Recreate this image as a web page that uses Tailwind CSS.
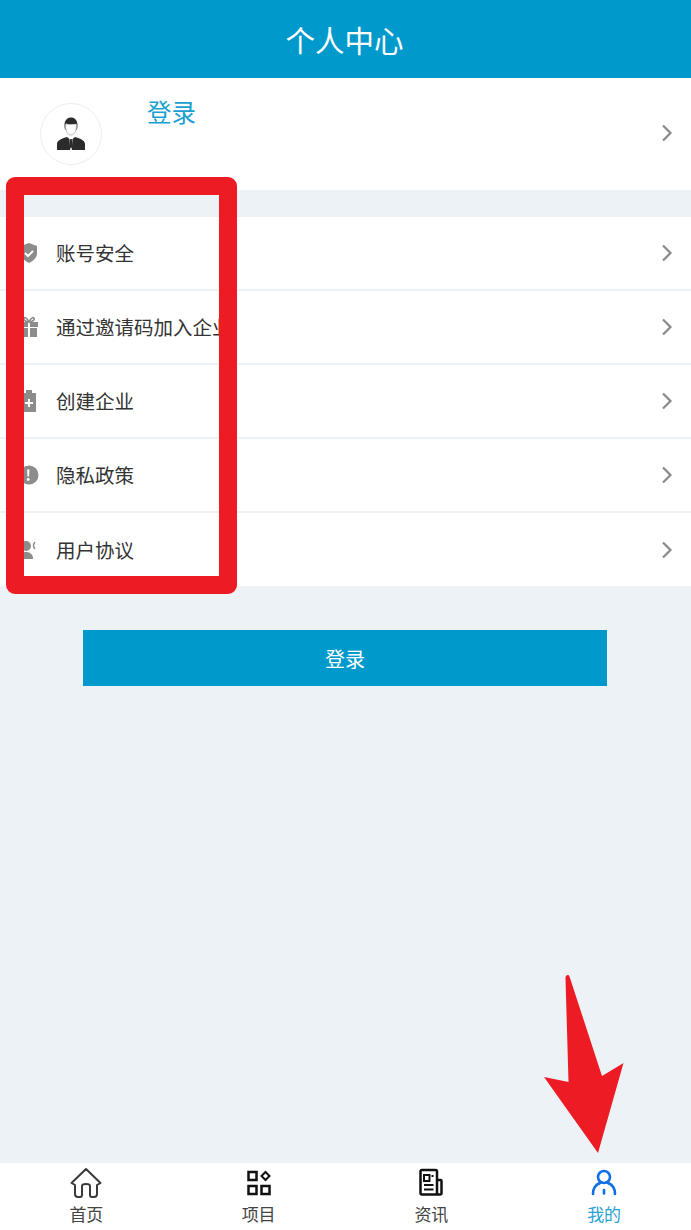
<!DOCTYPE html>
<html lang="zh">
<head>
<meta charset="UTF-8" />
<meta name="viewport" content="width=device-width, initial-scale=1.0" />
<title>个人中心</title>
<script src="https://cdn.jsdelivr.net/npm/@tailwindcss/browser@4"></script>
</head>
<body class="relative w-[691px] h-[1230px] overflow-hidden flex flex-col bg-[#edf2f6] font-['Noto_Sans_CJK_SC','Noto_Sans',sans-serif]">
    <!-- Header -->
    <header class="h-[78px] shrink-0 bg-[#0099cc] flex items-center justify-center text-white text-[29.5px] pr-[2px]">个人中心</header>

    <!-- Profile -->
    <section class="h-[112px] shrink-0 bg-white flex items-start pl-[40px] pr-[18px]">
        <div class="w-[62px] h-[62px] mt-[25px] rounded-full border border-[#eeeeee] flex items-center justify-center">
            <svg width="28" height="34" viewBox="0 0 28 34">
                <path d="M7.500 8c0-5 3-7.500 6.500-7.500S20.500 3 20.500 8c0 1.500 0 3-.5 4.500l-.7.300c.4-2 .5-4 .2-6-2 .6-9 .6-11 0-.3 2-.2 4 .2 6l-.7-.3C7.500 11 7.500 9.500 7.500 8z" fill="#2b2b2b"/>
                <path d="M8.500 7c2 .5 9 .5 11 0 .3 5-1.500 11-5.500 11S8.200 12 8.500 7z" fill="#fff" stroke="#777" stroke-width=".5"/>
                <path d="M0 33v-6c0-3 3-5 10-7l2.500 2 .7 11zM28 33v-6c0-3-3-5-10-7l-2.500 2-.7 11z" fill="#2b2b2b"/>
                <path d="M13.200 22h1.600l.8 7-1.600 3-1.600-3z" fill="#2b2b2b"/>
            </svg>
        </div>
        <span class="ml-[45px] mt-[16px] text-[24.500px] leading-[36px] text-[#1a9fd0]">登录</span>
        <svg class="ml-auto mt-[46px]" width="12" height="18" viewBox="0 0 12 18" fill="none" stroke="#8a8a8a" stroke-width="2.200"><path d="M2 1.500l7.500 7.500L2 16.500"/></svg>
    </section>

    <!-- Menu -->
    <ul class="mt-[27px] flex flex-col gap-[2px] bg-[#edf2f6] shrink-0 text-[19.500px] leading-[28px] text-[#333]">
        <li class="h-[72px] bg-white flex items-center pl-[19px] pr-[18px]">
            <svg class="w-[20px] h-[22px]" viewBox="0 0 20 22"><path d="M10 1l8 3v7c0 5-4 8-8 10-4-2-8-5-8-10V4z" fill="#8c8c8c"/><path d="M6 11l3 3 5-5" stroke="#fff" stroke-width="2" fill="none"/></svg>
            <span class="ml-[17px]">账号安全</span>
            <svg class="ml-auto" width="12" height="18" viewBox="0 0 12 18" fill="none" stroke="#8a8a8a" stroke-width="2.200"><path d="M2 1.500l7.500 7.500L2 16.500"/></svg>
        </li>
        <li class="h-[72px] bg-white flex items-center pl-[19px] pr-[18px]">
            <svg class="w-[20px] h-[22px]" viewBox="0 0 20 22" fill="#8c8c8c"><path d="M1 6h8v5H1zM11 6h8v5h-8zM2 12h7v9H2zM11 12h7v9h-7z"/><path d="M10 6C8 2 6 1 5 2s1 4 5 4c4 0 6-3 5-4s-3 0-5 4z" fill="none" stroke="#8c8c8c" stroke-width="1.500"/></svg>
            <span class="ml-[17px]">通过邀请码加入企业</span>
            <svg class="ml-auto" width="12" height="18" viewBox="0 0 12 18" fill="none" stroke="#8a8a8a" stroke-width="2.200"><path d="M2 1.500l7.500 7.500L2 16.500"/></svg>
        </li>
        <li class="h-[72px] bg-white flex items-center pl-[19px] pr-[18px]">
            <svg class="w-[20px] h-[24px]" viewBox="0 0 20 24"><path d="M3 4h4V1h6v3h4v19H3z" fill="#8c8c8c"/><path d="M10 10v8M6 14h8" stroke="#fff" stroke-width="2"/></svg>
            <span class="ml-[17px]">创建企业</span>
            <svg class="ml-auto" width="12" height="18" viewBox="0 0 12 18" fill="none" stroke="#8a8a8a" stroke-width="2.200"><path d="M2 1.500l7.500 7.500L2 16.500"/></svg>
        </li>
        <li class="h-[72px] bg-white flex items-center pl-[19px] pr-[18px]">
            <svg class="w-[20px] h-[20px]" viewBox="0 0 20 20"><circle cx="10" cy="10" r="9.500" fill="#8c8c8c"/><path d="M8 4.500h2.500L10 11.500H8.500z" fill="#fff"/><circle cx="9.200" cy="14.500" r="1.400" fill="#fff"/></svg>
            <span class="ml-[17px]">隐私政策</span>
            <svg class="ml-auto" width="12" height="18" viewBox="0 0 12 18" fill="none" stroke="#8a8a8a" stroke-width="2.200"><path d="M2 1.500l7.500 7.500L2 16.500"/></svg>
        </li>
        <li class="h-[73px] bg-white flex items-center pl-[19px] pr-[18px]">
            <svg class="w-[20px] h-[20px]" viewBox="0 0 20 20" fill="#8c8c8c"><circle cx="7" cy="6" r="5"/><path d="M0 19c0-5 3-7 7-7s7 2 7 7z"/><path d="M16 2c-2 2-2 5 0 7" fill="none" stroke="#8c8c8c" stroke-width="1.500"/></svg>
            <span class="ml-[17px]">用户协议</span>
            <svg class="ml-auto" width="12" height="18" viewBox="0 0 12 18" fill="none" stroke="#8a8a8a" stroke-width="2.200"><path d="M2 1.500l7.500 7.500L2 16.500"/></svg>
        </li>
    </ul>

    <!-- Login button -->
    <div class="flex-1 pt-[44px] pl-[83px]">
        <button class="w-[524px] h-[56px] pt-[2px] bg-[#0099cc] text-white text-[20px]">登录</button>
    </div>

    <!-- Bottom tabs -->
    <nav class="h-[67px] shrink-0 bg-white grid grid-cols-4 text-[17px] leading-[24px] text-[#444]">
        <div class="flex flex-col items-center pt-[4px]">
            <svg width="32" height="32" viewBox="0 0 32 32" fill="none" stroke="#3a3a3a" stroke-width="2" stroke-linejoin="round" stroke-linecap="round"><path d="M1.500 16L16 2l14.500 14-3.500 2v9c0 2-1 3-3 3h-2c-1 0-2-1-2-2v-9c0-1-1-2-4-2s-4 1-4 2v9c0 1-1 2-2 2H8c-2 0-3-1-3-3v-9z"/></svg>
            <span class="mt-[3px]">首页</span>
        </div>
        <div class="flex flex-col items-center pt-[4px] pr-[1px]">
            <svg width="32" height="32" viewBox="0 0 32 32" fill="none" stroke="#111" stroke-width="2.500"><rect x="5.500" y="5" width="8" height="8"/><rect x="5.500" y="19" width="8" height="8"/><rect x="18.500" y="19" width="8" height="8"/><path d="M22.500 5l4 4-4 4-4-4z" stroke-width="2"/></svg>
            <span class="mt-[3px]">项目</span>
        </div>
        <div class="flex flex-col items-center pt-[4px] pr-[1px]">
            <svg width="32" height="32" viewBox="0 0 32 32" fill="none" stroke="#111" stroke-width="2.500"><path d="M22 27.500H7c-1 0-1.500-.5-1.500-1.500V4.500C5.500 3.500 6 3 7 3h13.500c1 0 1.500.5 1.500 1.500zM22 13h3.500c.5 0 1 .5 1 1v12c0 1-.5 1.500-1.500 1.500h-3"/><rect x="9" y="8" width="5.500" height="6" stroke-width="2"/><path d="M9 18h9.500M9 22.500h9.500M16.500 9h2" stroke-width="2"/></svg>
            <span class="mt-[3px]">资讯</span>
        </div>
        <div class="flex flex-col items-center pt-[4px] pr-[1px] text-[#2ba3d2]">
            <svg width="32" height="32" viewBox="0 0 32 32" fill="none" stroke="#0f6fe6" stroke-width="2.600" stroke-linecap="round"><circle cx="16" cy="10" r="6"/><path d="M5 27c0-6 3-9.500 7-11M27 27c0-6-3-9.500-7-11M16 23v3.500"/></svg>
            <span class="mt-[3px]">我的</span>
        </div>
    </nav>

    <!-- Red annotations -->
    <div class="absolute left-[6px] top-[177px] w-[231px] h-[417px] border-[18px] border-[#ed1c24] rounded-[9px]"></div>
    <svg class="absolute left-0 top-0 pointer-events-none" width="691" height="1230" viewBox="0 0 691 1230">
        <path d="M565.500 978c0-3 3-4 4-1.500L602 1076l21.500-13-25.500 90-54-76 24.500 5z" fill="#ed1c24"/>
    </svg>
</body>
</html>
